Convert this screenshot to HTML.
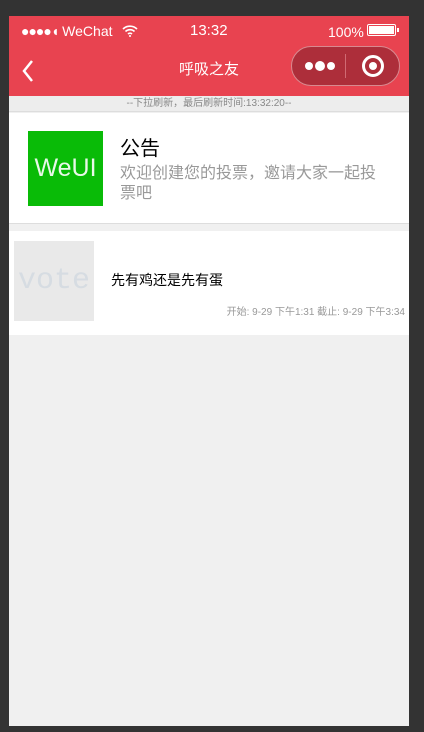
<!DOCTYPE html>
<html><head><meta charset="utf-8"><style>
*{margin:0;padding:0;box-sizing:border-box}
body{width:424px;height:732px;background:#333;position:relative;overflow:hidden;font-family:"Liberation Sans","Noto Sans CJK SC",sans-serif}
#ph{position:absolute;left:9px;top:16px;width:400px;height:710px;background:#f0f0f0;overflow:hidden}
.hd{position:absolute;left:0;top:0;width:400px;height:80px;background:#e84350;color:#fff}
.abs{position:absolute}
</style></head><body>
<div id="ph">
<div class="hd">
 <div class="abs" style="left:12px;top:6px;font-size:14px;line-height:18px"><span style="letter-spacing:-1px">●●●●◖</span> WeChat</div>
 <svg class="abs" style="left:113px;top:9px" width="16" height="12" viewBox="0 0 16 12"><path d="M1 4a10 10 0 0 1 14 0M3.5 6.5a6.5 6.5 0 0 1 9 0M6 9a3 3 0 0 1 4 0" stroke="#fff" stroke-width="1.6" fill="none"/><circle cx="8" cy="11" r="1" fill="#fff"/></svg>
 <div class="abs" style="left:181px;top:6px;font-size:15px;line-height:18px">13:32</div>
 <div class="abs" style="left:319px;top:7px;font-size:14px;line-height:18px">100%</div>
 <div class="abs" style="left:358px;top:8px;width:29px;height:12px;border:1.5px solid #fff;border-radius:2px;padding:1px"><div style="background:#fff;width:100%;height:100%"></div></div>
 <div class="abs" style="left:388px;top:12px;width:2px;height:4px;background:#fff"></div>
 <svg class="abs" style="left:12px;top:43px" width="14" height="24" viewBox="0 0 14 24"><path d="M11 2L3 12l8 10" stroke="#fff" stroke-width="2.5" fill="none"/></svg>
 <div class="abs" style="left:0;width:400px;top:44px;text-align:center;font-size:15px;line-height:20px">呼吸之友</div>
 <div class="abs" style="left:282px;top:30px;width:109px;height:40px;border-radius:20px;background:#ad2e3a;border:1px solid #d88a90"></div>
 <div class="abs" style="left:296px;top:46px;width:8px;height:8px;border-radius:50%;background:#fff"></div>
 <div class="abs" style="left:306px;top:45px;width:10px;height:10px;border-radius:50%;background:#fff"></div>
 <div class="abs" style="left:318px;top:46px;width:8px;height:8px;border-radius:50%;background:#fff"></div>
 <div class="abs" style="left:336px;top:38px;width:1px;height:24px;background:#d06a73"></div>
 <div class="abs" style="left:353px;top:39px;width:22px;height:22px;border-radius:50%;border:3px solid #fff"></div>
 <div class="abs" style="left:360px;top:46px;width:8px;height:8px;border-radius:50%;background:#fff"></div>
</div>
<div class="abs" style="left:0;top:80px;width:400px;height:16px;background:#ededed;text-align:center;font-size:10px;line-height:16px;color:#888;border-bottom:1px solid #ddd">--下拉刷新，最后刷新时间:13:32:20--</div>
<div class="abs" style="left:0;top:97px;width:400px;height:111px;background:#fff;border-bottom:1px solid #ddd">
 <div class="abs" style="left:19px;top:18px;width:75px;height:75px;background:#09bb07;color:#e8f8e8;font-size:25px;line-height:75px;text-align:center">WeUI</div>
 <div class="abs" style="left:111px;top:24px;font-size:20px;line-height:24px;color:#000">公告</div>
 <div class="abs" style="left:111px;top:51px;width:264px;font-size:16px;line-height:20px;color:#999">欢迎创建您的投票，邀请大家一起投票吧</div>
</div>
<div class="abs" style="left:0;top:215px;width:400px;height:104px;background:#fff">
 <div class="abs" style="left:5px;top:10px;width:80px;height:80px;background:#e9e9e9;color:#d6dce2;font-family:'Liberation Mono',monospace;font-size:30px;line-height:80px;text-align:center">vote</div>
 <div class="abs" style="left:102px;top:40px;font-size:14px;line-height:18px;color:#000">先有鸡还是先有蛋</div>
 <div class="abs" style="right:4px;top:75px;font-size:10px;line-height:14px;color:#999">开始: 9-29 下午1:31 截止: 9-29 下午3:34</div>
</div>
</div>
</body></html>
